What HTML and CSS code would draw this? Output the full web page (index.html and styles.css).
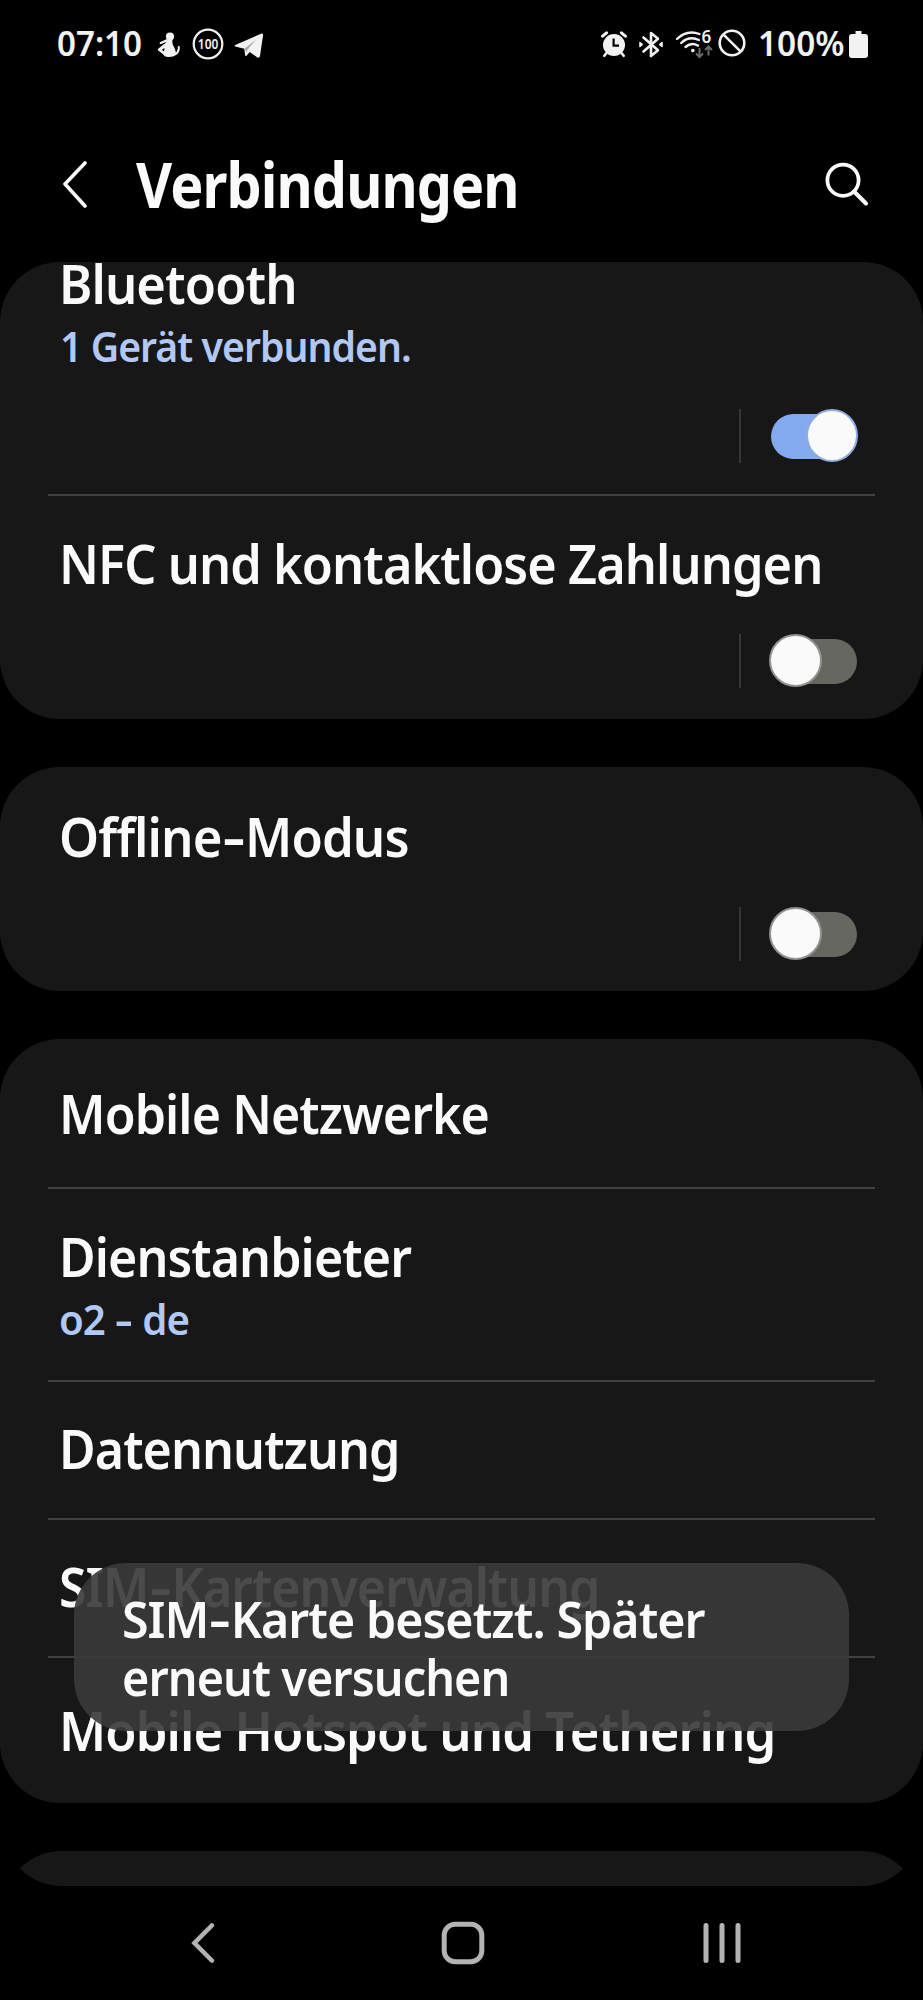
FILE: index.html
```html
<!DOCTYPE html>
<html lang="de">
<head>
<meta charset="utf-8">
<title>Verbindungen</title>
<link rel="stylesheet" href="styles.css">
</head>
<body>
<div class="screen">
  <div class="status">
    <span class="status-text clock">07:10</span>
    <svg class="ic-person" width="24" height="26" viewBox="0 0 24 26">
      <circle cx="13" cy="4.600" r="4.100" fill="#f2f2f2"/>
      <path d="M10.500 8.200L3.800 11" stroke="#f2f2f2" stroke-width="2.400" fill="none" stroke-linecap="round"/>
      <path d="M9.500 8H15.500C14.800 12 16.500 13.500 18 17L19 21C17.500 24 15 25.200 11 25C8.500 25 6.800 24 6.500 22.500L1.500 18.800C.5 18 .8 17 1.500 16.500L6.500 12.500C8.500 11.500 9.500 10 9.500 8Z" fill="#f2f2f2"/>
      <path d="M4.800 17.800L7.600 16L7 19.600Z" fill="#000"/>
      <path d="M21.800 15C22.200 18.500 20 22 15.500 23.500" stroke="#f2f2f2" stroke-width="2" fill="none" stroke-linecap="round"/>
    </svg>
    <svg class="ic-hundred" width="32" height="32" viewBox="0 0 32 32">
      <circle cx="16" cy="16" r="14.300" fill="none" stroke="#f2f2f2" stroke-width="2.200"/>
      <text class="badge-num" x="5.800" y="20.800" textLength="20.500" lengthAdjust="spacingAndGlyphs">100</text>
    </svg>
    <svg class="ic-telegram" width="30" height="26" viewBox="0 0 30 26">
      <path d="M1.200 12L27 .800Q29.400 0 29 2.500L26 23Q25.400 25.600 23 24.200L15.800 19L12.500 22.800Q11.200 23.500 11 21.800L10.300 15.800L1.200 13.400Q0 12.700 1.200 12Z" fill="#f2f2f2"/>
      <path d="M10.800 15.400L22 6.500L13.600 16.600L12.200 19.500Z" fill="#000" opacity=".3"/>
    </svg>
    <svg class="ic-alarm" width="26" height="27" viewBox="0 0 26 27">
      <circle cx="13" cy="14" r="11" fill="#f2f2f2"/>
      <path d="M1.600 5.200L5.600 1.800M24.400 5.200L20.400 1.800" stroke="#f2f2f2" stroke-width="3" stroke-linecap="round"/>
      <path d="M5.500 22L3.300 24.800M20.500 22L22.700 24.800" stroke="#f2f2f2" stroke-width="2.600" stroke-linecap="round"/>
      <path d="M12.600 7.500V14.600H18" stroke="#000" stroke-width="2.200" fill="none"/>
    </svg>
    <svg class="ic-bt" width="24" height="27" viewBox="0 0 24 27">
      <path d="M4.500 6.500L19 19.200L12 25V2L19 7.800L4.500 20.500" stroke="#f2f2f2" stroke-width="2.600" fill="none" stroke-linejoin="round" stroke-linecap="round"/>
      <path d="M.8 11L3.900 13.500L.8 16ZM23.200 11L20.100 13.500L23.200 16Z" fill="#f2f2f2" stroke="#f2f2f2" stroke-linejoin="round"/>
    </svg>
    <svg class="ic-wifi" width="38" height="29" viewBox="0 0 38 29">
      <path d="M2 9C8.500 2.500 17 1.200 24.500 4M6.200 13C11.500 8 18 7.300 24 10M10.500 17C14 14 19 13.400 23 15.600" stroke="#f2f2f2" stroke-width="2.400" fill="none" stroke-linecap="round"/>
      <circle cx="17.800" cy="20.600" r="1.800" fill="#f2f2f2"/>
      <text class="wifi-num" x="26.500" y="13">6</text>
      <path d="M24.500 18V26.500M21 23.500L24.500 27L28 23.500M33.500 25.500V17M30 20L33.500 16.500L37 20" stroke="#6a6a6a" stroke-width="2" fill="none"/>
    </svg>
    <svg class="ic-block" width="28" height="28" viewBox="0 0 28 28">
      <circle cx="14" cy="14" r="12.300" fill="none" stroke="#f2f2f2" stroke-width="2.600"/>
      <path d="M5.300 5.300L22.700 22.700" stroke="#f2f2f2" stroke-width="2.600"/>
    </svg>
    <span class="status-text percent">100%</span>
    <svg class="ic-battery" width="19" height="27" viewBox="0 0 19 27">
      <path d="M6.500 0H12.500V3H16Q19 3 19 6V24Q19 27 16 27H3Q0 27 0 24V6Q0 3 3 3H6.500Z" fill="#f2f2f2"/>
    </svg>
  </div>

  <header class="header">
    <svg class="back" width="26" height="48" viewBox="0 0 26 48"><path d="M23 3L3 24L23 46" stroke="#fafafa" stroke-width="3.600" fill="none" stroke-linecap="round" stroke-linejoin="round"/></svg>
    <h1 class="title">Verbindungen</h1>
    <svg class="search" width="44" height="46" viewBox="0 0 44 46"><circle cx="18" cy="19.200" r="15.600" fill="none" stroke="#fafafa" stroke-width="3.700"/><path d="M29 30.500L41 42.500" stroke="#fafafa" stroke-width="4" stroke-linecap="round"/></svg>
  </header>

  <main class="list">
    <section class="card">
      <div class="row row-bluetooth">
        <div class="label w-bluetooth">Bluetooth</div>
        <div class="sub w-device">1 Gerät verbunden.</div>
        <div class="control"><i class="bar"></i><span class="switch on"></span></div>
      </div>
      <div class="row row-nfc">
        <div class="label w-nfc">NFC und kontaktlose Zahlungen</div>
        <div class="control"><i class="bar"></i><span class="switch"></span></div>
      </div>
    </section>

    <section class="card">
      <div class="row row-offline">
        <div class="label w-offline">Offline<span class="hyphen">-</span>Modus</div>
        <div class="control"><i class="bar"></i><span class="switch"></span></div>
      </div>
    </section>

    <section class="card">
      <div class="row row-networks"><div class="label w-networks">Mobile Netzwerke</div></div>
      <div class="row row-provider">
        <div class="label w-provider">Dienstanbieter</div>
        <div class="sub w-o2">o2 <span class="hyphen">-</span> de</div>
      </div>
      <div class="row row-plain"><div class="label w-data">Datennutzung</div></div>
      <div class="row row-plain"><div class="label w-sim">SIM<span class="hyphen">-</span>Kartenverwaltung</div></div>
      <div class="row row-hotspot"><div class="label w-hotspot">Mobile Hotspot und Tethering</div></div>
    </section>

    <svg class="card-edge" width="923" height="35" viewBox="0 0 923 35"><path d="M20 17.500A60 60 0 0 1 63 0H860A60 60 0 0 1 903 17.500A60 60 0 0 1 860 35H63A60 60 0 0 1 20 17.500Z" fill="#171717"/></svg>
  </main>

  <nav class="nav">
    <svg width="24" height="44" viewBox="0 0 24 44"><path d="M20.800 4.500L3.500 22L20.800 39.500" stroke="#b3b3b3" stroke-width="4.600" fill="none" stroke-linecap="round"/></svg>
    <svg class="home" width="44" height="44" viewBox="0 0 44 44"><rect x="3.200" y="3.200" width="37.600" height="37.600" rx="11" fill="none" stroke="#b3b3b3" stroke-width="5"/></svg>
    <svg width="40" height="44" viewBox="0 0 40 44"><path d="M4 4.500V39.500M20 4.500V39.500M36 4.500V39.500" stroke="#b3b3b3" stroke-width="5" stroke-linecap="round"/></svg>
  </nav>

  <div class="toast">
    <div class="toast-line w-toast1">SIM<span class="hyphen">-</span>Karte besetzt. Später</div>
    <div class="toast-line w-toast2">erneut versuchen</div>
  </div>
</div>
</body>
</html>
```
FILE: styles.css
```css
*, *::before, *::after { box-sizing: border-box; }
body {
  margin: 0;
  background: #000;
  color: #fafafa;
  font-family: "Noto Sans", sans-serif;
  font-weight: 600;
}
svg { display: block; flex: none; }

.screen {
  position: relative;
  width: 923px;
  height: 2000px;
  overflow: hidden;
  display: flex;
  flex-direction: column;
}

/* Status bar */
.status {
  height: 88px;
  flex: none;
  display: flex;
  align-items: center;
  padding-left: 57px;
  color: #f2f2f2;
}
.status-text {
  font-size: 35px;
  line-height: 48px;
  padding-bottom: 2px;
  white-space: nowrap;
  transform-origin: left;
}
.clock { width: 99px; transform: scaleX(.946); }
.percent { width: 91px; transform: scaleX(.954); margin-left: 12px; }
.ic-person { margin: 2px 0 0 1px; }
.ic-hundred { margin-left: 11px; }
.ic-telegram { margin: 3px 0 0 10px; }
.ic-alarm { margin-left: 337px; }
.ic-bt { margin-left: 12px; }
.ic-wifi { margin-left: 12px; overflow: visible; }
.ic-block { margin: 0 0 2px 5px; }
.ic-battery { margin-top: 1px; }
.badge-num { font: 600 13.5px "Noto Sans", sans-serif; fill: #f2f2f2; }
.wifi-num { font: 600 17px "Noto Sans", sans-serif; fill: #f2f2f2; }

/* Page header */
.header {
  height: 174px;
  flex: none;
  display: flex;
  align-items: center;
  padding: 18px 54px 0 62px;
}
.title {
  flex: 1;
  margin: 0 0 0 48px;
  font-size: 62px;
  font-weight: 700;
  line-height: 84px;
  letter-spacing: -1px;
  transform: scaleX(.898);
  transform-origin: left;
}

/* Cards */
.list { display: flex; flex-direction: column; gap: 48px; }
.card {
  background: #171717;
  border-radius: 60px;
  overflow: hidden;
}
.row {
  position: relative;
  display: flex;
  flex-direction: column;
  padding-left: 59px;
}
.row + .row::before {
  content: "";
  position: absolute;
  left: 48px;
  right: 48px;
  top: 0;
  height: 2px;
  background: #414141;
}
.row-bluetooth { height: 232px; }
.row-bluetooth .label { margin-top: -11px; }
.row-bluetooth .control { margin-top: 37px; }
.row-nfc { height: 225px; padding-top: 37px; }
.row-offline { height: 224px; padding-top: 37px; }
.row-networks { height: 148px; padding-top: 42px; }
.row-provider { height: 193px; padding-top: 37px; }
.row-plain { height: 138px; padding-top: 36px; }
.row-hotspot { height: 147px; padding-top: 42px; }

.label {
  font-size: 55px;
  line-height: 64px;
  letter-spacing: -1px;
  white-space: nowrap;
  transform-origin: left;
}
.sub {
  margin-top: 5px;
  font-size: 41.5px;
  line-height: 52px;
  letter-spacing: -1px;
  color: #b1c8f5;
  white-space: nowrap;
  transform-origin: left;
}
.hyphen {
  display: inline-block;
  margin: 0 .08em;
  transform: scaleX(1.4);
}
.w-bluetooth { transform: scaleX(.922); }
.w-nfc { transform: scaleX(.917); }
.w-offline { transform: scaleX(.926); }
.w-networks { transform: scaleX(.911); }
.w-provider { transform: scaleX(.911); }
.w-data { transform: scaleX(.911); }
.w-sim { transform: scaleX(.907); }
.w-hotspot { transform: scaleX(.923); }
.w-device { margin-left: 1px; transform: scaleX(.943); }
.w-o2 { transform: scaleX(.97); }

/* Switches */
.control {
  display: flex;
  align-items: center;
  justify-content: flex-end;
  height: 54px;
  margin-top: 38px;
  padding-right: 65px;
}
.row-nfc .control { margin-top: 39px; }
.row-offline .control { margin-top: 39px; }
.bar { width: 2px; height: 54px; background: #363636; margin-right: 28px; }
.switch {
  position: relative;
  width: 89px;
  height: 54px;
  display: flex;
  align-items: center;
}
.switch::before {
  content: "";
  width: 86px;
  height: 45px;
  margin-left: 2px;
  border-radius: 23px;
  background: #666760;
}
.switch::after {
  content: "";
  position: absolute;
  left: 0;
  top: 0;
  width: 53px;
  height: 53px;
  border-radius: 50%;
  border: 2.5px solid #929292;
  background: #fafafa;
}
.switch.on::before { background: #83a9ee; }
.switch.on::after { left: 37px; width: 52px; border-color: #8fadde; }

/* Navigation bar */
.nav {
  flex: 1;
  display: flex;
  align-items: center;
  justify-content: space-between;
  padding: 0 181px 0 191px;
}
.home { margin-left: 8px; }

/* Toast */
.toast {
  position: absolute;
  left: 74px;
  top: 1563px;
  width: 775px;
  height: 168px;
  padding: 26px 0 0 48px;
  border-radius: 52px;
  background: rgba(57, 57, 57, .91);
}
.toast-line {
  font-size: 51px;
  line-height: 58px;
  letter-spacing: -1px;
  white-space: nowrap;
  transform-origin: left;
}
.w-toast1 { transform: scaleX(.947); }
.w-toast2 { transform: scaleX(.916); }
```
